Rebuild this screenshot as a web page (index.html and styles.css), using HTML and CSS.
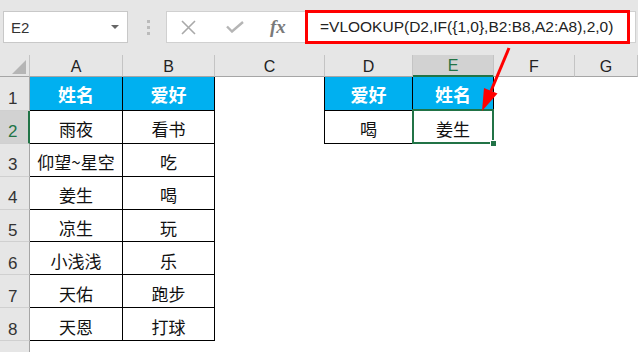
FILE: index.html
```html
<!DOCTYPE html>
<html lang="zh">
<head>
    <meta charset="UTF-8">
    <title>VLOOKUP 反向查找</title>
    <link rel="stylesheet" href="styles.css">
</head>
<body>
    <div class="app">
        <div class="toolbar">
            <div class="namebox"><span>E2</span><span class="caret"></span></div>
            <div class="grip"><i></i><i></i><i></i></div>
            <div class="fbar">
                <div class="fbtns">
                    <svg class="ico-x" width="15" height="15" viewBox="0 0 15 15"><path d="M1 1L14 14M14 1L1 14" stroke="#a9a9a9" stroke-width="1.6" fill="none"/></svg>
                    <svg class="ico-ok" width="18" height="12" viewBox="0 0 18 12"><path d="M1 5.5L6 10.5L17 1" stroke="#b5b5b5" stroke-width="2.4" fill="none"/></svg>
                    <span class="fx">fx</span>
                </div>
                <div class="formula">=VLOOKUP(D2,IF({1,0},B2:B8,A2:A8),2,0)</div>
            </div>
        </div>

        <div class="sheet">
            <div class="row head">
                <div class="ch corner"><span class="tri"></span></div>
                <div class="ch">A</div>
                <div class="ch">B</div>
                <div class="ch">C</div>
                <div class="ch">D</div>
                <div class="ch on">E</div>
                <div class="ch">F</div>
                <div class="ch">G</div>
            </div>
            <div class="row first">
                <div class="rh">1</div>
                <div class="cell t hd">姓名</div>
                <div class="cell t hd">爱好</div>
                <div class="cell br"></div>
                <div class="cell t hd">爱好</div>
                <div class="cell t hd">姓名</div>
            </div>
            <div class="row">
                <div class="rh on">2</div>
                <div class="cell t">雨夜</div>
                <div class="cell t">看书</div>
                <div class="cell br"></div>
                <div class="cell t">喝</div>
                <div class="cell t sel">姜生</div>
            </div>
            <div class="row">
                <div class="rh">3</div>
                <div class="cell t">仰望~星空</div>
                <div class="cell t">吃</div>
            </div>
            <div class="row">
                <div class="rh">4</div>
                <div class="cell t">姜生</div>
                <div class="cell t">喝</div>
            </div>
            <div class="row">
                <div class="rh">5</div>
                <div class="cell t">凉生</div>
                <div class="cell t">玩</div>
            </div>
            <div class="row">
                <div class="rh">6</div>
                <div class="cell t">小浅浅</div>
                <div class="cell t">乐</div>
            </div>
            <div class="row">
                <div class="rh">7</div>
                <div class="cell t">天佑</div>
                <div class="cell t">跑步</div>
            </div>
            <div class="row">
                <div class="rh">8</div>
                <div class="cell t">天恩</div>
                <div class="cell t">打球</div>
            </div>
            <div class="row last">
                <div class="rh end"></div>
            </div>
        </div>

        <svg class="arrow" width="638" height="352" viewBox="0 0 638 352">
            <line x1="509" y1="48" x2="491" y2="91" stroke="#ff0000" stroke-width="3"/>
            <polygon points="482,111 497.5,93.5 484,88" fill="#ff0000"/>
        </svg>
    </div>
</body>
</html>
```

FILE: styles.css
```css
body {
    margin: 0;
    padding: 0;
    font-family: "Liberation Sans", Arial, sans-serif;
    background: #fff;
}
.app {
    position: relative;
    width: 638px;
    height: 352px;
    overflow: hidden;
    background: #fff;
}
.toolbar {
    height: 55px;
    box-sizing: border-box;
    padding-top: 11px;
    background: #e6e6e6;
    display: flex;
    align-items: flex-start;
}
.namebox {
    margin-left: 3px;
    width: 125px;
    height: 32px;
    box-sizing: border-box;
    padding: 0 8px 0 7px;
    background: #fff;
    border: 1px solid #c8c8c8;
    display: flex;
    align-items: center;
    justify-content: space-between;
    font-size: 15px;
    color: #333;
}
.caret {
    width: 0;
    height: 0;
    border-left: 4px solid transparent;
    border-right: 4px solid transparent;
    border-top: 4px solid #666;
}
.grip {
    margin-left: 19px;
    padding-top: 9px;
    display: flex;
    flex-direction: column;
    gap: 3px;
}
.grip i {
    display: block;
    width: 3px;
    height: 3px;
    background: #bbb;
}
.fbar {
    margin-left: 16px;
    width: 470px;
    height: 32px;
    box-sizing: border-box;
    background: #fff;
    border: 1px solid #d0d0d0;
    display: flex;
}
.fbtns {
    width: 138px;
    box-sizing: border-box;
    padding-left: 14px;
    display: flex;
    align-items: center;
}
.ico-ok {
    margin-left: 30px;
}
.fx {
    margin-left: 26px;
    font-family: "Liberation Serif", "Times New Roman", serif;
    font-style: italic;
    font-weight: bold;
    font-size: 19px;
    color: #7a7a7a;
}
.formula {
    margin-top: -2px;
    width: 325px;
    height: 34px;
    box-sizing: border-box;
    padding-left: 12px;
    border: 3px solid #ff0000;
    background: #fff;
    font-size: 15.5px;
    line-height: 28px;
    color: #222;
    white-space: nowrap;
}
.sheet {
    height: 297px;
    display: flex;
    flex-direction: column;
}
.row {
    display: grid;
    grid-template-columns: 30px 93px 92px 110px 88px 81px 81px 63px;
    height: 33px;
}
.row.head {
    height: 22px;
}
.row.first {
    height: 34px;
}
.row.last {
    flex: 1;
}
.ch {
    box-sizing: border-box;
    background: #e6e6e6;
    border-right: 1px solid #c4c4c4;
    border-bottom: 1px solid #a6a6a6;
    display: flex;
    align-items: center;
    justify-content: center;
    padding-top: 2px;
    font-size: 16px;
    color: #222;
}
.ch.on {
    background: #d2d2d2;
    color: #217346;
    border-bottom: 2px solid #217346;
}
.corner {
    justify-content: flex-end;
    align-items: flex-end;
    padding: 0 3px 2px 0;
}
.tri {
    width: 0;
    height: 0;
    border-left: 14px solid transparent;
    border-bottom: 14px solid #b5b5b5;
}
.rh {
    box-sizing: border-box;
    background: #e6e6e6;
    border-right: 1px solid #a6a6a6;
    border-bottom: 1px solid #d0d0d0;
    display: flex;
    align-items: center;
    padding: 11px 0 0 8px;
    font-size: 17px;
    color: #333;
}
.rh.on {
    background: #d2d2d2;
    color: #217346;
    border-right: 2px solid #217346;
}
.rh.end {
    border-bottom: none;
}
.cell {
    box-sizing: border-box;
    display: flex;
    align-items: center;
    justify-content: center;
    padding-top: 4px;
    font-family: "Noto Sans CJK SC", "Liberation Sans", sans-serif;
    font-size: 17px;
    line-height: 1;
    color: #111;
}
.t {
    border-right: 1px solid #000;
    border-bottom: 1px solid #000;
}
.br {
    border-right: 1px solid #000;
}
.hd {
    background: #00b0f0;
    color: #fff;
    font-weight: bold;
    font-size: 18px;
    padding-top: 1px;
}
.sel {
    position: relative;
}
.sel::after {
    content: "";
    position: absolute;
    left: -1px;
    top: -2px;
    right: -1px;
    bottom: -1px;
    border: 2px solid #217346;
}
.sel::before {
    content: "";
    position: absolute;
    right: -4px;
    bottom: -4px;
    width: 5px;
    height: 5px;
    background: #217346;
    border: 1px solid #fff;
    z-index: 2;
}
.arrow {
    position: absolute;
    top: 0;
    left: 0;
    pointer-events: none;
}
```
